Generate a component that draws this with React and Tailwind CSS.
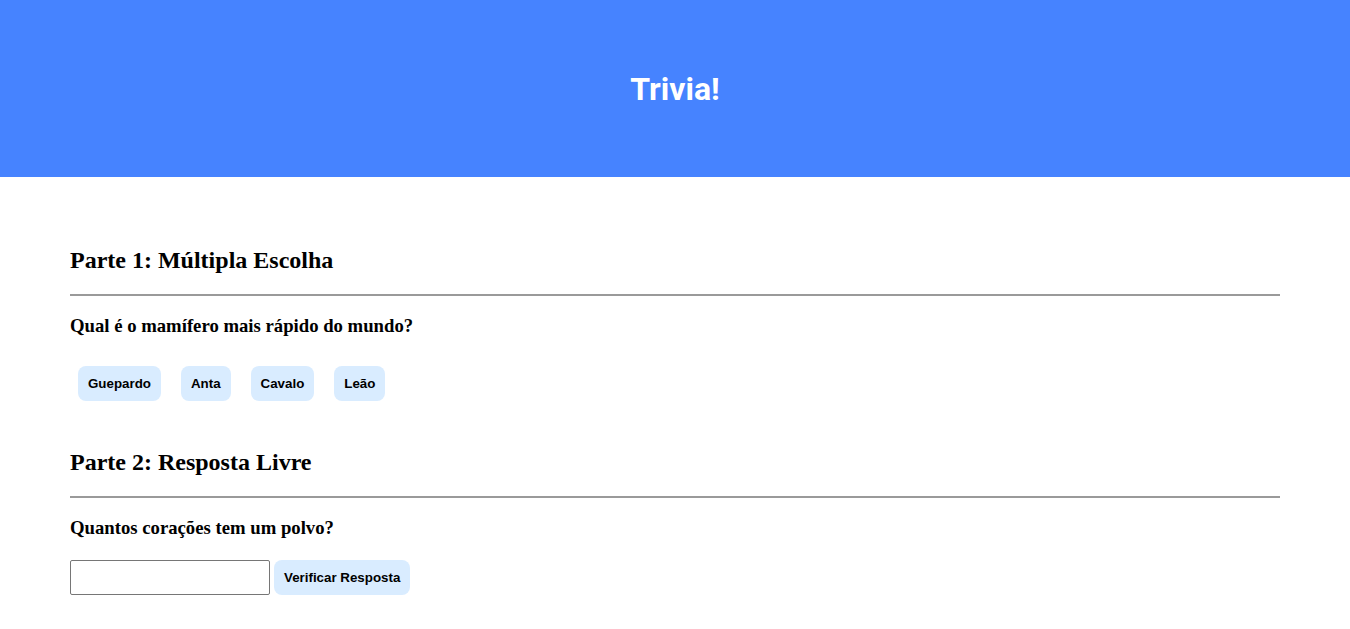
import React, { useState } from 'react';

const options = ['Guepardo', 'Anta', 'Cavalo', 'Leão'];

const serif = "font-['Liberation_Serif','Times_New_Roman',serif]";
const sans = "font-['Liberation_Sans',Arial,sans-serif]";

const Pill = ({ children, onClick }) => (
  <button
    onClick={onClick}
    className={`${sans} h-[35px] px-[10px] rounded-[8px] bg-[#d9ecff] text-[13.333px] font-bold text-black leading-none`}
  >
    {children}
  </button>
);

export default function App() {
  const [answer, setAnswer] = useState('');

  return (
    <div className="min-h-screen bg-white text-black">
      <header className="h-[177px] bg-[#4683ff] flex items-center justify-center">
        <h1 className="font-['Roboto',sans-serif] font-bold text-[32px] text-white leading-none">Trivia!</h1>
      </header>

      <main className="px-[70px] pt-[69px] pb-10">
        <section>
          <h2 className={`${serif} text-[24px] font-bold leading-[28px]`}>Parte 1: Múltipla Escolha</h2>
          <hr className="mt-[20px] border-t-2 border-[#9a9a9a]" />
          <h3 className={`${serif} mt-[19px] text-[18.72px] font-bold leading-[21px]`}>
            Qual é o mamífero mais rápido do mundo?
          </h3>
          {/* multiple choice */}
          <div className="mt-[30px] pl-2 flex gap-5">
            {options.map((o) => (
              <Pill key={o}>{o}</Pill>
            ))}
          </div>
        </section>

        <section className="mt-[47px]">
          <h2 className={`${serif} text-[24px] font-bold leading-[28px]`}>Parte 2: Resposta Livre</h2>
          <hr className="mt-[20px] border-t-2 border-[#9a9a9a]" />
          <h3 className={`${serif} mt-[19px] text-[18.72px] font-bold leading-[21px]`}>
            Quantos corações tem um polvo?
          </h3>
          <div className="mt-[22px] flex gap-1">
            <input
              value={answer}
              onChange={(e) => setAnswer(e.target.value)}
              className="w-[200px] h-[35px] border border-[#767676] rounded-[2px] px-1 text-[13px]"
            />
            <Pill>Verificar Resposta</Pill>
          </div>
        </section>
      </main>
    </div>
  );
}
